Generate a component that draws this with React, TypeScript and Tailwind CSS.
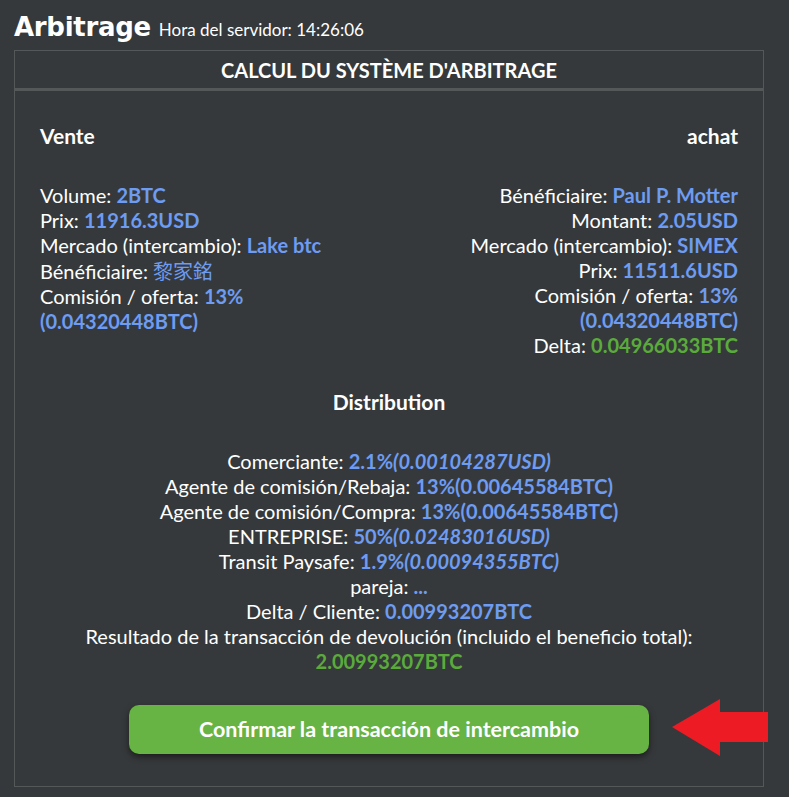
const blue = "text-[#6d9cf2] font-bold"
const green = "text-[#5aab3b] font-bold"

function Line({label, children}: {label: string; children: React.ReactNode}) {
  return (
    <p>
      {label} {children}
    </p>
  )
}

export default function App() {
  return (
    <div className="min-h-[797px] w-full bg-[#36393b] text-white font-['Lato','Open_Sans',sans-serif] relative">
      <div className="px-[14px] pt-[8px]">
        <div className="flex flex-row items-baseline gap-[8px] h-[42px]">
          <h1 className="text-[26px] font-bold tracking-[-0.3px] font-['DejaVu_Sans','Lato',sans-serif]">Arbitrage</h1>
          <span className="text-[17px]">Hora del servidor: 14:26:06</span>
        </div>

        <div className="w-[750px] border border-[#555859]">
          <div className="h-[40px] flex items-center justify-center border-b-[3px] border-[#555859]">
            <h2 className="text-[20px] font-bold uppercase">CALCUL DU SYSTÈME D'ARBITRAGE</h2>
          </div>

          <div className="px-[25px] pt-[32px] pb-[32px] text-[20px] leading-[25px]">
            <div className="flex flex-row justify-between">
              <div className="w-[330px]">
                <h3 className="font-bold text-[21px]">Vente</h3>
                <div className="mt-[35px]">
                  <Line label="Volume:"><span className={blue}>2BTC</span></Line>
                  <Line label="Prix:"><span className={blue}>11916.3USD</span></Line>
                  <Line label="Mercado (intercambio):"><span className={blue}>Lake btc</span></Line>
                  <Line label="Bénéficiaire:"><span className={blue + " font-['Noto_Sans_CJK_TC',sans-serif] font-normal"}>黎家銘</span></Line>
                  <Line label="Comisión / oferta:"><span className={blue}>13%</span></Line>
                  <p className={blue}>(0.04320448BTC)</p>
                </div>
              </div>
              <div className="w-[330px] text-right">
                <h3 className="font-bold text-[21px]">achat</h3>
                <div className="mt-[35px]">
                  <Line label="Bénéficiaire:"><span className={blue}>Paul P. Motter</span></Line>
                  <Line label="Montant:"><span className={blue}>2.05USD</span></Line>
                  <Line label="Mercado (intercambio):"><span className={blue}>SIMEX</span></Line>
                  <Line label="Prix:"><span className={blue}>11511.6USD</span></Line>
                  <Line label="Comisión / oferta:"><span className={blue}>13%</span></Line>
                  <p className={blue}>(0.04320448BTC)</p>
                  <Line label="Delta:"><span className={green}>0.04966033BTC</span></Line>
                </div>
              </div>
            </div>

            <div className="mt-[31px] text-center">
              <h3 className="font-bold text-[21px]">Distribution</h3>
              <div className="mt-[35px]">
                <Line label="Comerciante:"><span className={blue}>2.1%<i>(0.00104287USD)</i></span></Line>
                <Line label="Agente de comisión/Rebaja:"><span className={blue}>13%(0.00645584BTC)</span></Line>
                <Line label="Agente de comisión/Compra:"><span className={blue}>13%(0.00645584BTC)</span></Line>
                <Line label="ENTREPRISE:"><span className={blue}>50%<i>(0.02483016USD)</i></span></Line>
                <Line label="Transit Paysafe:"><span className={blue}>1.9%<i>(0.00094355BTC)</i></span></Line>
                <Line label="pareja:"><span className={blue}>...</span></Line>
                <Line label="Delta / Cliente:"><span className={blue}>0.00993207BTC</span></Line>
                <p>Resultado de la transacción de devolución (incluido el beneficio total):</p>
                <p className={green}>2.00993207BTC</p>
              </div>

              <button className="mt-[31px] w-[520px] h-[49px] rounded-[10px] bg-[#67b344] text-white font-bold text-[21.5px] shadow-[0_3px_6px_rgba(0,0,0,0.5)]">
                Confirmar la transacción de intercambio
              </button>
            </div>
          </div>
        </div>
      </div>

      <svg className="absolute left-[671px] top-[698px]" width="98" height="59" viewBox="0 0 98 59">
        <path d="M1 29 L49 1 L49 14 L97 14 L97 44 L49 44 L49 58 Z" fill="#ed1c24" />
      </svg>
    </div>
  )
}
